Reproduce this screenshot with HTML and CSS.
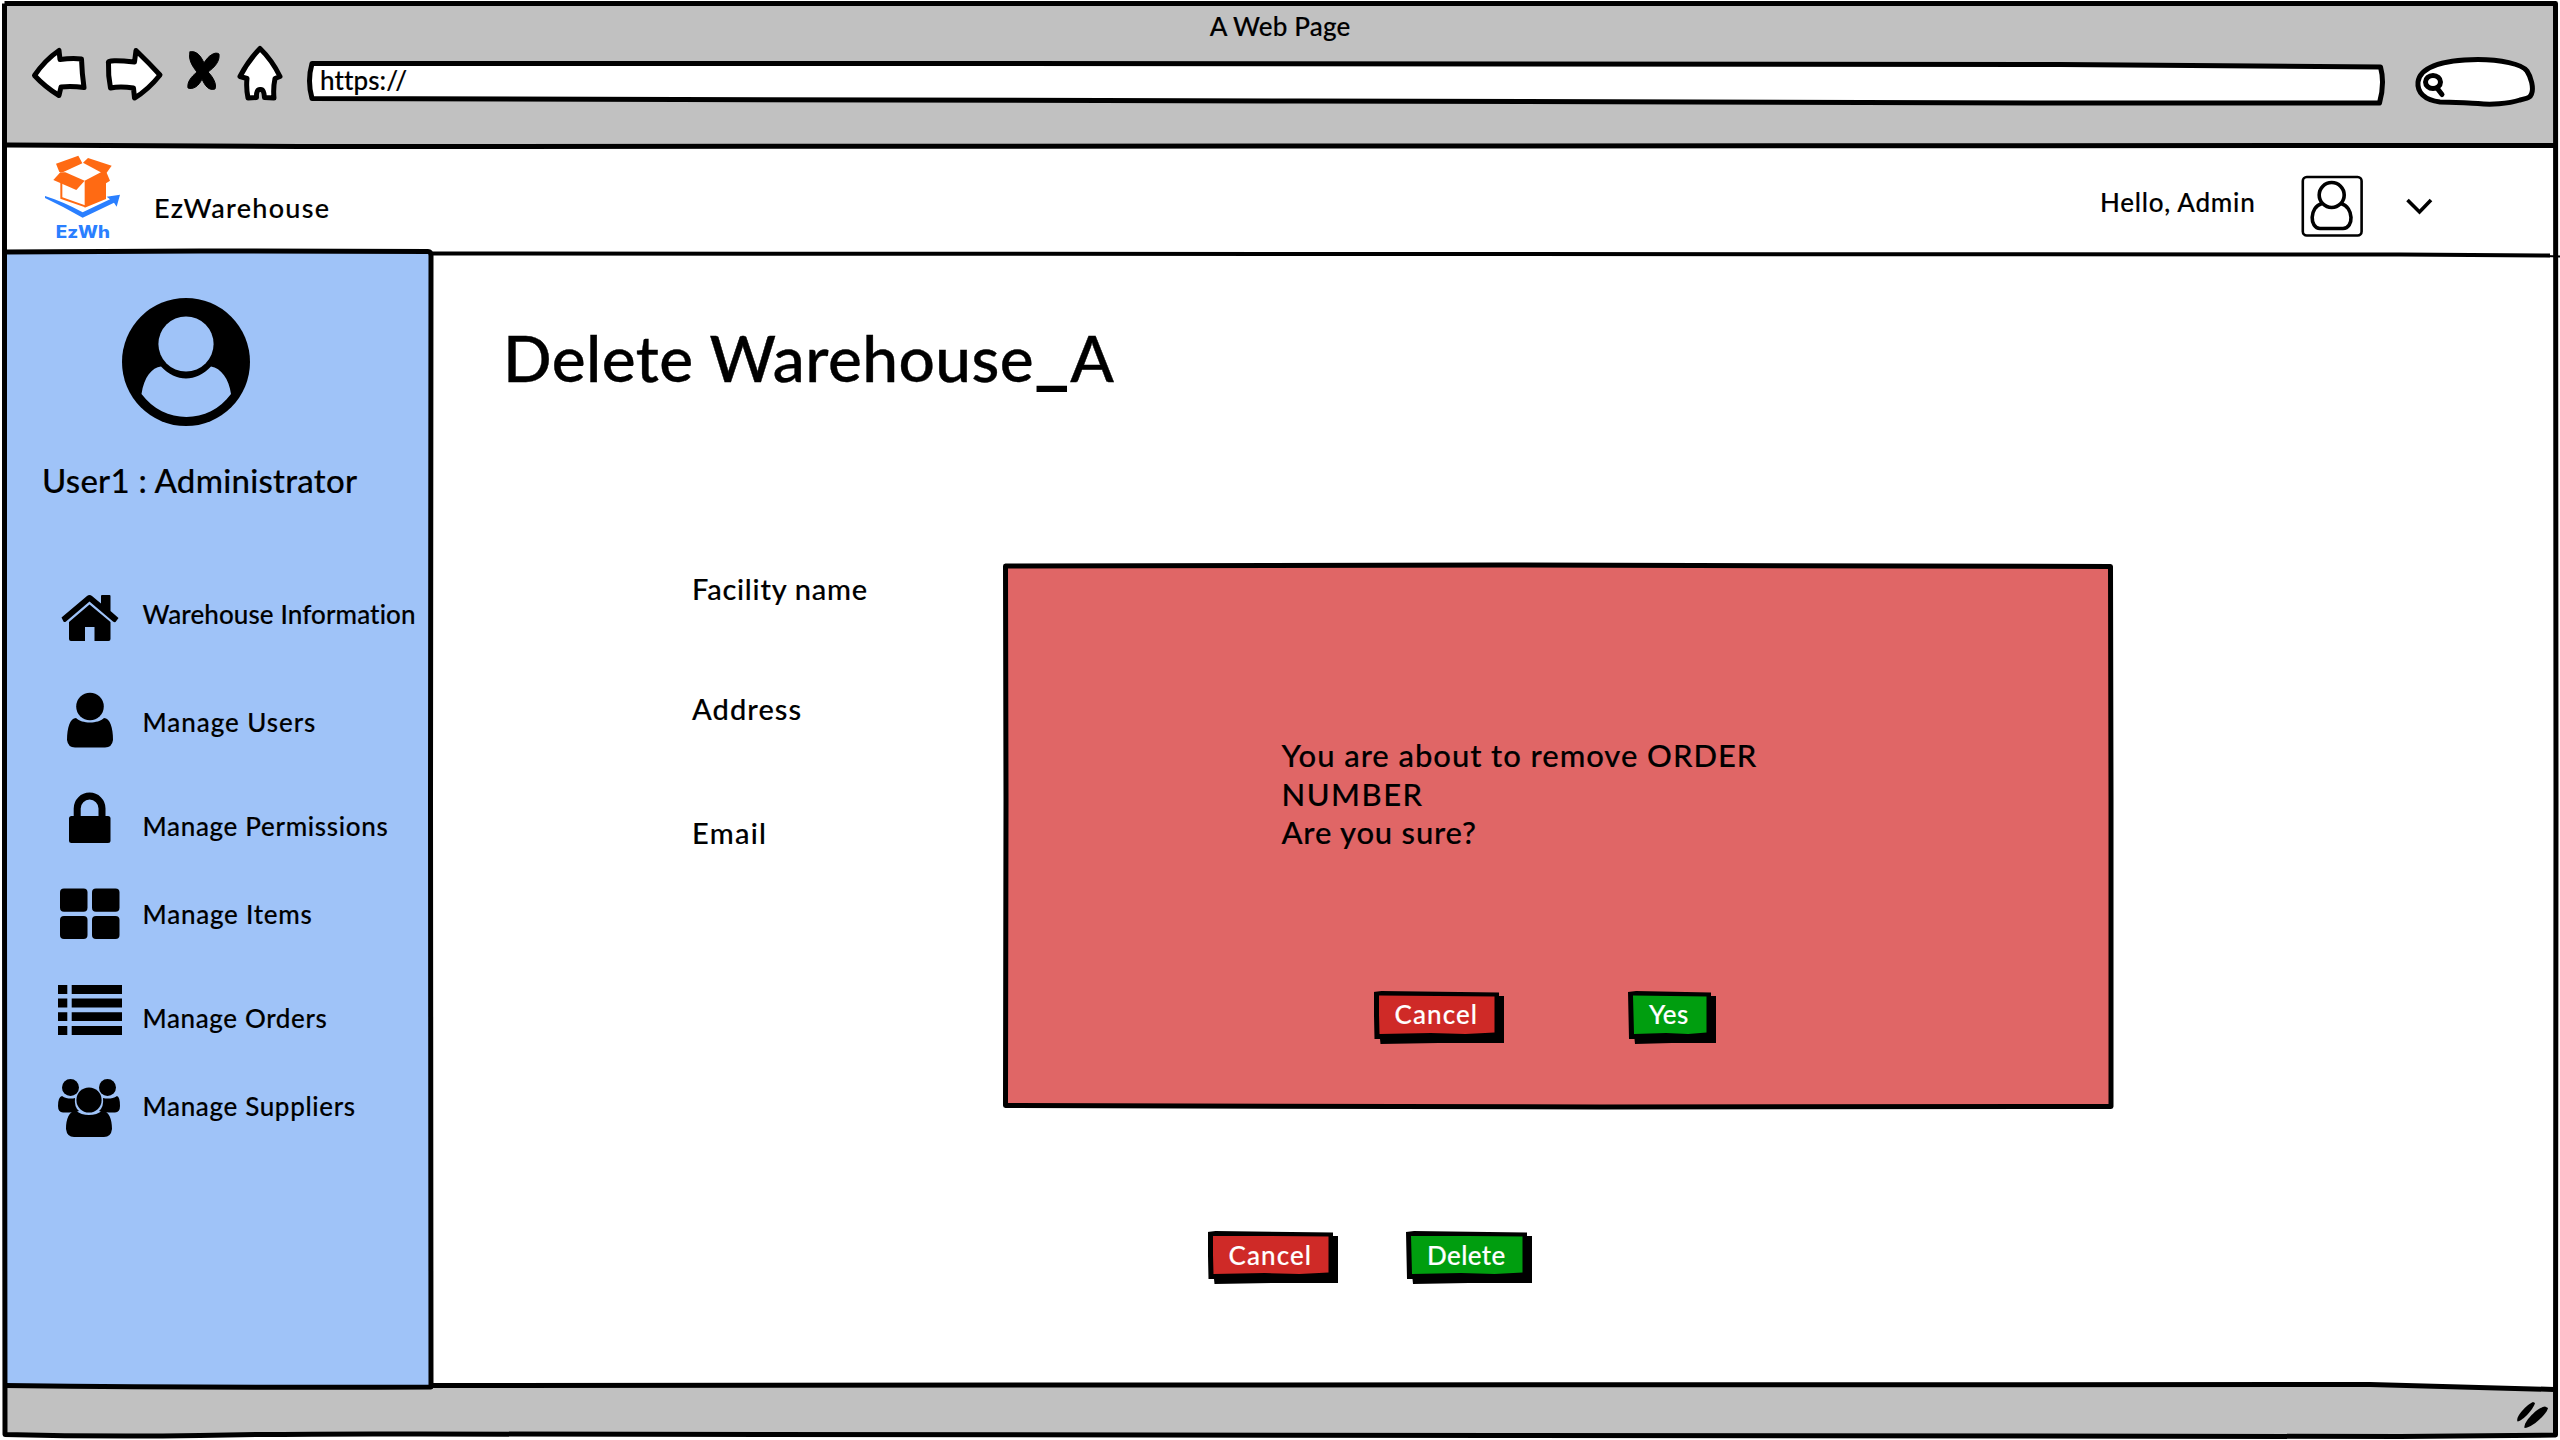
FILE: index.html
```html
<!DOCTYPE html>
<html lang="en">
<head>
<meta charset="utf-8">
<title>A Web Page</title>
<link rel="stylesheet" href="styles.css">
</head>
<body>
<div class="window">
  <header class="chrome">
    <div class="window-title">A Web Page</div>
    <div class="toolbar">
      <svg class="tool back" viewBox="30 44 60 60" width="60" height="60"><path d="M34.500 75.500Q45 60 59 50.500L60 59.500Q72 58 81.500 59Q82 74 84 87.500Q72 86 61 87L59 95.500Q45 87 34.500 75.500Z"/></svg>
      <svg class="tool forward" viewBox="102 44 64 60" width="64" height="60"><path d="M108.500 63Q107 59 134.500 62L136 50.500Q149 63 160 75Q148 90 134.500 98L133.500 88Q120 86 110.500 88Q108 76 108.500 63Z"/></svg>
      <svg class="tool stop" viewBox="185 48 38 46" width="38" height="46"><path d="M190 52C196 50 201 56 204 63C208 56 215 51 219 54C220 61 215 67 208 72C213 77 217 84 215 89C209 91 205 86 202 79C199 86 193 90 188 88C187 82 191 77 197 72C192 66 188 59 190 52Z"/></svg>
      <svg class="tool home" viewBox="234 42 52 62" width="52" height="62"><path d="M260 48.500Q248 61 240 76.500L247 78.500Q246 88 248 98L256.500 97.500Q256 89 260.500 89.500Q264 89 264.500 97.500L274 98Q273 88 275 78.500L280 76.500Q272 60 260 48.500Z"/></svg>
      <div class="url-bar">
        <svg class="outline" viewBox="306 58 2084 50" width="2084" height="50"><path d="M312 63.500L1000 63.500L2060 64.500L2380.500 67Q2385 83 2379.500 103L2060 103L1300 101L312 98.500Q307 81 312 63.500Z"/></svg>
        <span class="url-text">https:<span class="slashes">//</span></span>
      </div>
      <svg class="tool search" viewBox="2410 54 130 58" width="130" height="58"><path d="M2440 102C2424 100 2417 92 2418 82C2420 68 2440 60 2478 59.500C2500 59.500 2522 64 2527 71C2531 77 2534 88 2531.500 94C2530 98 2527 98 2520 100C2508 104 2490 105 2478 103.500C2465 103 2450 102 2440 102Z"/><ellipse cx="2433" cy="82" rx="7.500" ry="6.500"/><path d="M2437 88L2442 94.500"/></svg>
    </div>
  </header>

  <div class="app-bar">
    <svg class="logo" viewBox="135 450 240 270" width="80" height="90">
      <g class="box">
        <path d="M168 491L235 467L247 490L190 516H178Z"/>
        <path d="M249 488L264 474L335 497L320 518H305Z"/>
        <path d="M181 517H196L254 542L229 570L160 540Z"/>
        <path d="M254 542L304 516H319L330 542L318 550V597L254 623Z"/>
      </g>
      <path class="box-edge" d="M184 548V594L256 619"/>
      <path class="swoosh" d="M135 588Q190 605 248 637L330 598L320 590L360 584L350 620L342 608L248 653Q190 620 135 594Z"/>
      <text class="logo-text" x="167" y="714" textLength="163" lengthAdjust="spacingAndGlyphs">EzWh</text>
    </svg>
    <span class="brand">EzWarehouse</span>
    <span class="greeting">Hello, Admin</span>
    <svg class="profile" viewBox="2300 174 64 64" width="64" height="64"><rect x="2302.800" y="177" width="58.800" height="58.500" rx="4"/><circle class="bold" cx="2331.700" cy="195" r="12.500"/><path class="bold" d="M2322 203.500C2309 207 2309.500 228.500 2320 228.500H2343C2354 228.500 2354 207 2341 203.500"/></svg>
    <svg class="chevron" viewBox="2404 196 32 20" width="32" height="20"><path d="M2407.500 200L2419.500 212L2431 200"/></svg>
  </div>

  <div class="body">
    <aside class="sidebar">
      <svg class="avatar" viewBox="122 298 128 128" width="128" height="128"><circle cx="186" cy="362" r="64"/><g class="cut"><circle cx="186" cy="344" r="27.600"/><path d="M141.500 394C144 377 152 367.500 161 366.500C176 382.500 196 382.500 211 366.500C221 368 229 379 231 394C209 424.500 164 424.500 141.500 394Z"/></g></svg>
      <p class="user">User1 : Administrator</p>
      <ul class="nav">
        <li class="item-home"><svg viewBox="56 595 68 48" width="68" height="48"><path d="M61.500 617.500L87 596Q89.500 594 92 596L101 603.500V596Q101 595 102 595H109.500Q110.500 595 110.500 596V611L118.500 618L115.500 622Q114.500 622.500 113 621.500L89.500 601.500L66 621.500Q64.500 622.500 63.500 621.500Z"/><path d="M89.500 604.500L110.500 622V639Q110.500 641 108.500 641H94.500V627H85V641H71Q69 641 69 639V622Z"/></svg><span>Warehouse Information</span></li>
        <li class="item-users"><svg viewBox="56 692 68 58" width="68" height="58"><circle cx="90" cy="706.500" r="13.800"/><path d="M76 718C82 724 98 724 104 718C110 718 113 728 113 740Q112 747.500 105 747.500H75Q68 747.500 67 740C67 728 70 718 76 718Z"/></svg><span>Manage Users</span></li>
        <li class="item-permissions"><svg viewBox="56 793 68 52" width="68" height="52"><path class="shackle" d="M77.200 818V808.500A12.400 12.400 0 0 1 102 808.500V818"/><rect x="69" y="816" width="41.500" height="27" rx="2.500"/></svg><span>Manage Permissions</span></li>
        <li class="item-items"><svg viewBox="56 888 68 52" width="68" height="52"><rect x="60" y="888.500" width="27.500" height="23.300" rx="4"/><rect x="92" y="888.500" width="27.500" height="23.300" rx="4"/><rect x="60" y="916" width="27.500" height="23" rx="4"/><rect x="92" y="916" width="27.500" height="23" rx="4"/></svg><span>Manage Items</span></li>
        <li class="item-orders"><svg viewBox="56 985 68 52" width="68" height="52"><path d="M58 985H67.300V994H58ZM71.700 985H122V994H71.700ZM58 998.500H67.300V1007.500H58ZM71.700 998.500H122V1007.500H71.700ZM58 1012.300H67.300V1021H58ZM71.700 1012.300H122V1021H71.700ZM58 1026H67.300V1035H58ZM71.700 1026H122V1035H71.700Z"/></svg><span>Manage Orders</span></li>
        <li class="item-suppliers"><svg viewBox="56 1078 68 60" width="68" height="60"><circle cx="70.500" cy="1087.500" r="8.500"/><circle cx="107.500" cy="1087.500" r="8.500"/><path d="M62 1096C66 1099 72 1099 75 1098Q74 1107 79 1111Q76 1112 69 1112.500H63Q58 1112 58 1106Q58 1097 62 1096ZM117 1096C113 1099 107 1099 103 1098Q104 1107 99 1111Q102 1112 109 1112.500H115Q120 1112 120 1106Q120 1097 117 1096Z"/><circle cx="89" cy="1100" r="12.600"/><path d="M76 1110.500C82 1116.500 96 1116.500 102 1110.500C109 1111 112 1119 112 1129Q111 1137 104 1137H74Q67 1137 66 1129C66 1119 69 1111 76 1110.500Z"/></svg><span>Manage Suppliers</span></li>
      </ul>
    </aside>

    <main class="content">
      <h1>Delete Warehouse<span class="underscore">_</span>A</h1>
      <div class="fields">
        <label class="f-name">Facility name</label>
        <label class="f-address">Address</label>
        <label class="f-email">Email</label>
      </div>
      <div class="actions">
        <button class="btn danger cancel"><span>Cancel</span></button>
        <button class="btn success delete"><span>Delete</span></button>
      </div>

      <section class="dialog">
        <svg class="outline" viewBox="1000 560 1116 552" width="1116" height="552"><path d="M1005.500 566L1500 565L2110.500 566.500L2111 800L2111 1106.500L1600 1107L1005.500 1105.500L1006 800Z"/></svg>
        <div class="message">
          <p class="line-1">You are about to remove ORDER</p>
          <p class="line-2">NUMBER</p>
          <p class="line-3">Are you sure?</p>
        </div>
        <div class="dialog-actions">
          <button class="btn danger cancel"><span>Cancel</span></button>
          <button class="btn success yes"><span>Yes</span></button>
        </div>
      </section>
    </main>
  </div>

  <footer class="status-bar">
    <svg class="grip" viewBox="2514 1398 38 32" width="38" height="32"><path d="M2533 1402C2528 1404 2515 1416 2517.500 1421.500C2523 1421 2534 1408 2535 1403Z"/><path d="M2548 1408L2545 1406.500C2538 1407 2523 1422 2524.500 1428C2532 1428 2547 1414 2548 1408Z"/></svg>
  </footer>

  <!-- hand-inked window frame and dividers -->
  <svg class="ink" viewBox="0 0 2560 1440" width="2560" height="1440">
    <path d="M4.500 3.500L1200 3.500L2555.500 3.500L2556 800L2555.500 1435L2400 1436.500L1500 1435.500L420 1434Q300 1433.500 200 1435.500Q100 1437 5 1434.500L4.500 900L4.500 3.500"/>
    <path d="M6 145L300 146.500L1300 146L2555 145.500"/>
    <path class="thin" d="M430 253.500L1300 254L2400 254.500L2550 255.500"/>
    <path class="hair" d="M2545 256L2560 256.500"/>
    <path d="M5 252L200 251L428 251.500Q431 251.500 431 256L430.500 800L431 1387Q240 1388 5 1385.500"/>
    <path d="M431 1385.500L1200 1385L2370 1384.500Q2470 1387 2554 1389.500"/>
  </svg>
</div>
</body>
</html>
```
FILE: styles.css
```css
* { box-sizing: border-box; }

body {
  margin: 0;
  background: #fff;
  color: #000;
  font-family: Lato, "Noto Sans", sans-serif;
  font-weight: 500;
  font-size: 26px;
  line-height: 32px;
  -webkit-text-stroke: 0.15px currentColor;
}

p, h1, ul { margin: 0; padding: 0; }
svg { display: block; flex: none; overflow: visible; }

.window {
  position: relative;
  display: flex;
  flex-direction: column;
  width: 2560px;
  height: 1440px;
  padding: 4px;
  overflow: hidden;
}

.ink {
  position: absolute;
  left: 0;
  top: 0;
  fill: none;
  stroke: #000;
  stroke-width: 5;
  stroke-linejoin: round;
  pointer-events: none;
}
.ink .thin { stroke-width: 4; }
.ink .hair { stroke-width: 2; }

/* browser chrome */
.chrome {
  height: 142px;
  padding-top: 6px;
  background: #c1c1c1;
}
.window-title {
  text-align: center;
  letter-spacing: 0.17px;
}
.toolbar { display: flex; padding-left: 26px; }
.tool {
  fill: #fff;
  stroke: #000;
  stroke-width: 5;
  stroke-linejoin: round;
  stroke-linecap: round;
}
.back { margin-top: 2px; }
.forward { margin: 2px 0 0 12px; }
.stop { margin: 6px 0 0 19px; fill: #000; stroke-width: 1; }
.home { margin-left: 11px; }
.url-bar {
  position: relative;
  width: 2084px;
  height: 50px;
  margin: 16px 0 0 20px;
  padding: 6px 0 0 14px;
}
.outline {
  position: absolute;
  left: 0;
  top: 0;
  fill: #fff;
  stroke: #000;
  stroke-width: 5;
  stroke-linejoin: round;
}
.url-text { position: relative; letter-spacing: 0.1px; }
.slashes { letter-spacing: 3px; }
.search { margin: 12px 0 0 20px; }

/* application bar */
.app-bar {
  display: flex;
  height: 107px;
  padding-left: 41px;
  background: #fff;
}
.logo { margin-top: 4px; }
.logo .box { fill: #ff6a13; }
.logo .box-edge { fill: none; stroke: #ff6a13; stroke-width: 6; }
.logo .swoosh, .logo-text { fill: #2a7fff; }
.logo-text { font: 800 50px Inter, sans-serif; -webkit-text-stroke: 0; }
.brand {
  width: 1900px;
  margin: 45px 0 0 29px;
  font-size: 27px;
  line-height: 34px;
  letter-spacing: 1.26px;
}
.greeting { width: 200px; margin: 40px 0 0 46px; letter-spacing: 0.74px; white-space: nowrap; }
.profile { margin-top: 28px; fill: none; stroke: #000; stroke-width: 2.6; }
.profile .bold { stroke-width: 3.6; }
.chevron { margin: 50px 0 0 40px; fill: none; stroke: #000; stroke-width: 3.6; stroke-linecap: butt; }

/* sidebar */
.body { display: flex; height: 1132px; }
.sidebar {
  width: 427px;
  padding: 45px 0 0 38px;
  background: #9fc3f8;
}
.avatar { margin-left: 80px; }
.avatar .cut { fill: #9fc3f8; }
.user {
  margin-top: 34px;
  font-size: 33px;
  line-height: 40px;
  letter-spacing: 0.25px;
}
.nav { margin-top: 95px; padding-left: 14px; list-style: none; }
.nav li { display: flex; gap: 18.500px; white-space: nowrap; }
.item-home { height: 97px; letter-spacing: 0.11px; }
.item-home span { padding-top: 3px; }
.item-users { height: 101px; letter-spacing: 0.95px; }
.item-users span { padding-top: 14px; }
.item-permissions { height: 95px; letter-spacing: 0.67px; }
.item-permissions span { padding-top: 17px; }
.item-items { height: 97px; letter-spacing: 0.76px; }
.item-items span { padding-top: 10px; }
.item-orders { height: 93px; letter-spacing: 0.62px; }
.item-orders span { padding-top: 17px; }
.item-suppliers { letter-spacing: 0.65px; }
.item-suppliers span { padding-top: 12px; }
.shackle { fill: none; stroke: #000; stroke-width: 7; }

/* main content */
.content {
  position: relative;
  flex: 1;
  background: #fff;
}
h1 {
  padding: 67px 0 0 72px;
  font-size: 64px;
  font-weight: 500;
  line-height: 76px;
  letter-spacing: 0.45px;
  -webkit-text-stroke-width: 0.4px;
}
.underscore { display: inline-block; transform: scaleX(1.12); margin: 0 3px; -webkit-text-stroke-width: 2px; }
.fields {
  display: flex;
  flex-direction: column;
  height: 658px;
  padding: 176px 0 0 261px;
  font-size: 29px;
  line-height: 34px;
}
.f-name { height: 120px; letter-spacing: 0.77px; }
.f-address { height: 124px; letter-spacing: 1.08px; }
.f-email { letter-spacing: 1.3px; }
.actions { display: flex; gap: 68px; padding: 177px 0 0 776.500px; }

/* shadowed buttons with a slightly uneven edge */
.btn {
  height: 53px;
  padding: 4.500px 9.500px 10px 5px;
  border: 0;
  background: #000;
  color: #fff;
  font: inherit;
  text-align: left;
  clip-path: polygon(0 1px, 8px 0, calc(100% - 5px) 1.500px, calc(100% - 5px) 5px, 100% 5px, 100% 52px, 50% 52px, 7px 100%, 6.500px 48px, 1px 48px);
}
.btn span {
  display: block;
  height: 38.500px;
  padding: 3px 0 0 16px;
  clip-path: polygon(0 0, 100% 1px, 100% 37px, 75% 38.500px, 45% 37.500px, 1px 38.500px);
}
.danger span { background: #cf2a27; }
.success span { background: #009e0f; }
.cancel { width: 130.500px; letter-spacing: 1.1px; }
.delete { width: 126px; letter-spacing: 0.4px; }
.yes { width: 88px; letter-spacing: 0.36px; }

/* confirmation dialog */
.dialog {
  position: absolute;
  left: 569px;
  top: 307px;
  width: 1116px;
  height: 552px;
}
.dialog .outline { fill: #e06666; }
.message {
  position: relative;
  padding: 176px 0 0 281.500px;
  font-size: 31px;
  line-height: 38.600px;
}
.line-1 { letter-spacing: 0.95px; }
.line-2 { letter-spacing: 1.5px; }
.line-3 { letter-spacing: 0.8px; }
.dialog-actions {
  position: relative;
  display: flex;
  gap: 124px;
  padding: 139.200px 0 0 373.500px;
}

/* status bar */
.status-bar {
  display: flex;
  justify-content: flex-end;
  height: 50px;
  padding: 13px 4px 0 0;
  background: #c1c1c1;
  clip-path: polygon(0 0, 93% 0, 100% 5px, 100% 100%, 0 100%);
}
```
